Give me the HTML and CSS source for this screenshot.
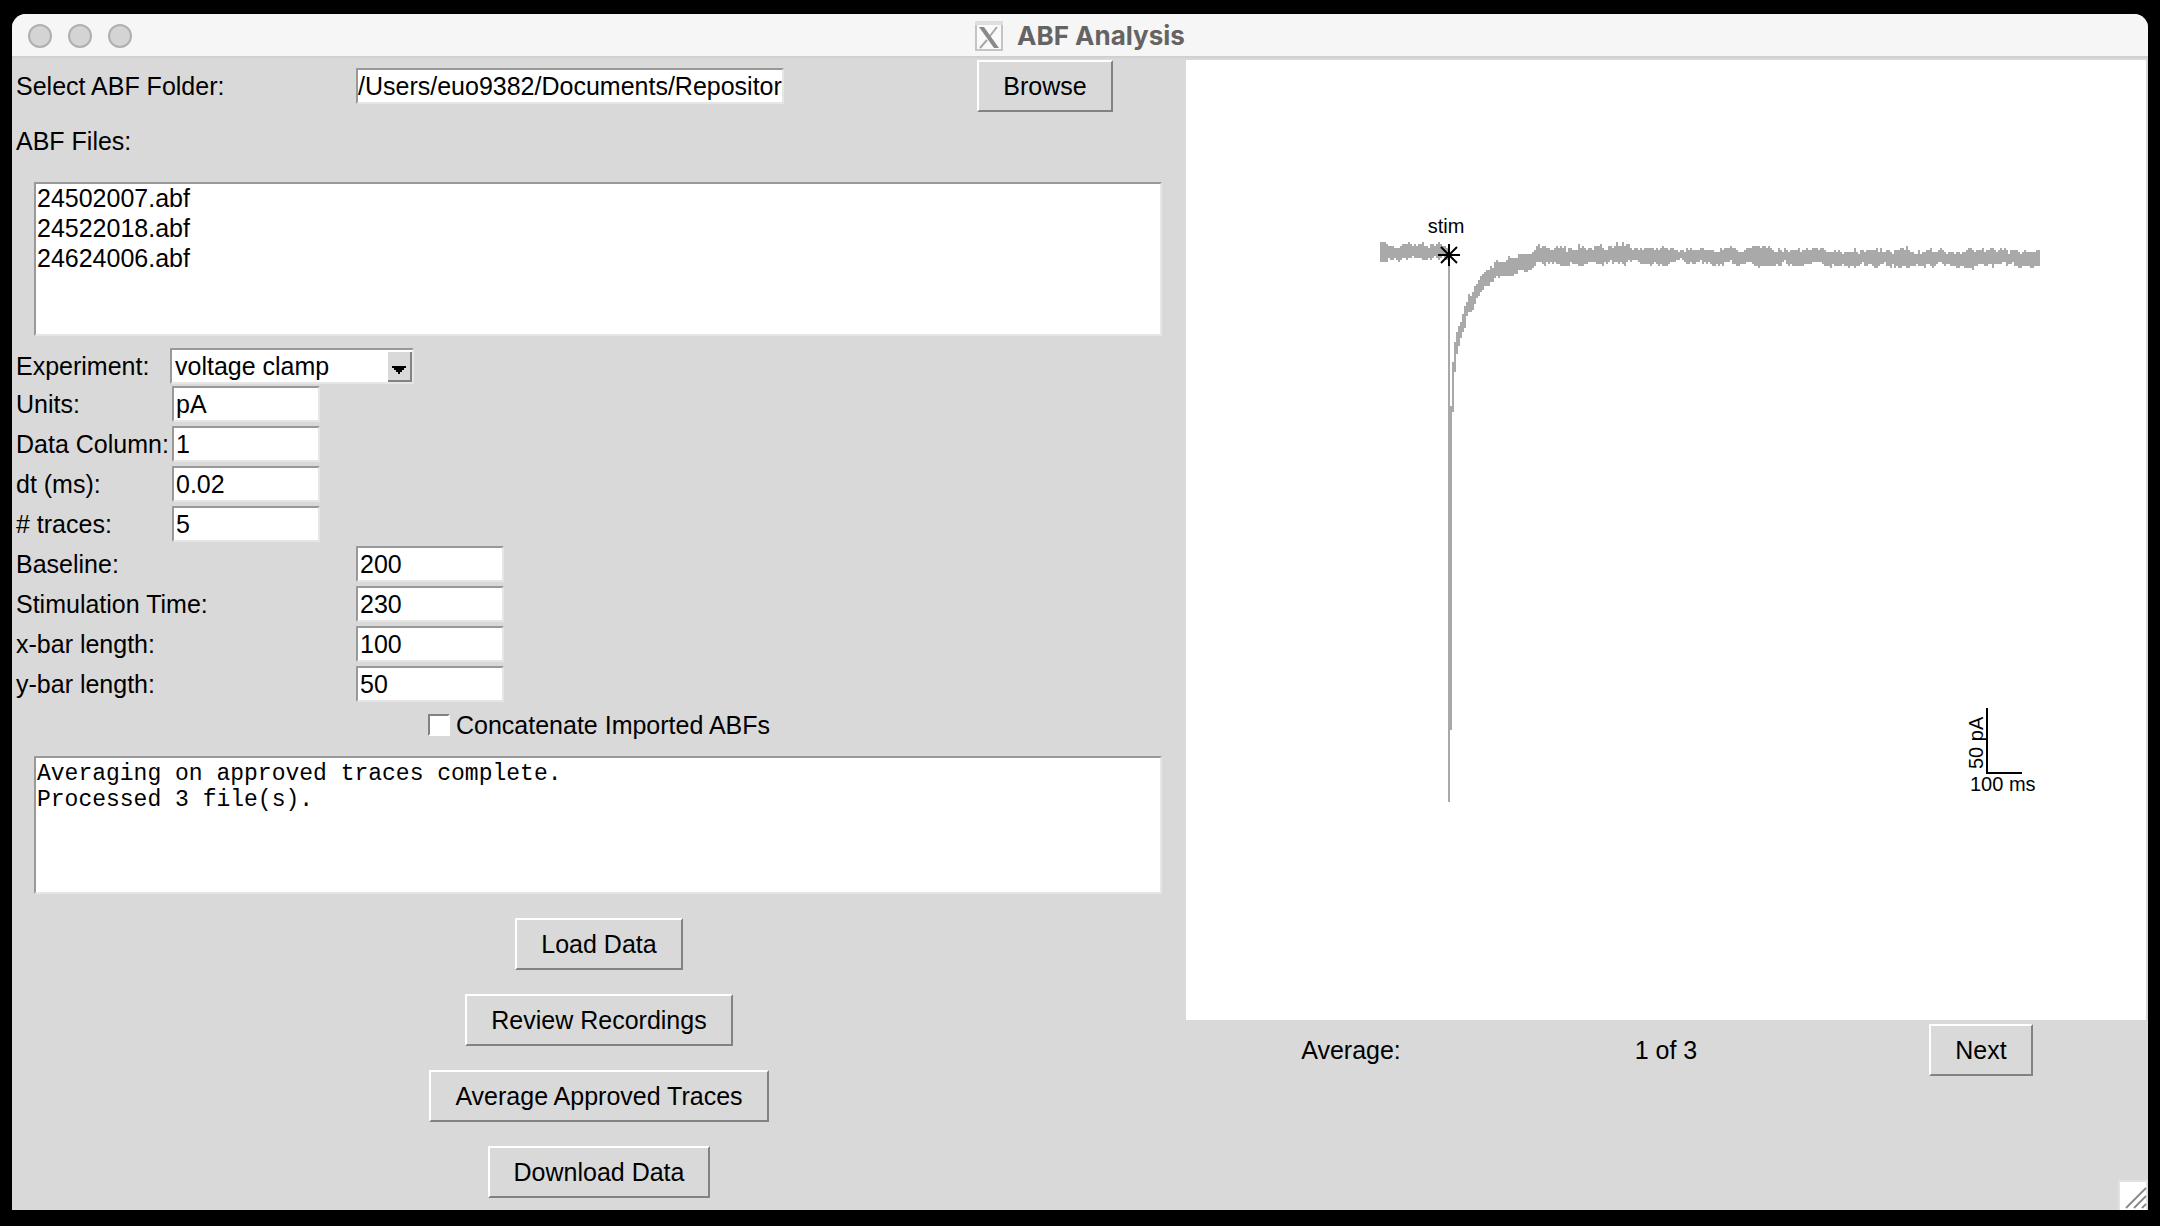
FILE: index.html
```html
<!DOCTYPE html>
<html lang="en">
<head>
<meta charset="utf-8">
<title>ABF Analysis</title>
<link rel="stylesheet" href="styles.css">
</head>
<body>
<div class="window">
  <header class="titlebar">
    <div class="lights">
      <button class="light" type="button" aria-label="Close"></button>
      <button class="light" type="button" aria-label="Minimize"></button>
      <button class="light" type="button" aria-label="Zoom"></button>
    </div>
    <h1 class="title">
      <svg class="x-icon" viewBox="0 0 28 30" aria-hidden="true">
        <rect x="1" y="1" width="26" height="28" fill="#fafafa" stroke="#c4c4c4" stroke-width="2"/>
        <path d="M0 2H28" stroke="#dedede" stroke-width="4"/>
        <path d="M22 6L15 15M12 19L5 27" stroke="#a8a8a8" stroke-width="2" fill="none"/>
        <path d="M4 6H9L24 27H19Z" fill="#8a8a8a"/>
      </svg>
      ABF Analysis
    </h1>
  </header>
  <main class="content">
    <form class="controls">
      <div class="row folder-row">
        <label for="folder">Select ABF Folder:</label>
        <input class="field folder" id="folder" type="text" value="/Users/euo9382/Documents/Repositor">
        <button class="button browse" type="button">Browse</button>
      </div>
      <label class="files-label" for="files">ABF Files:</label>
      <select class="files" id="files" size="5">
        <option>24502007.abf</option>
        <option>24522018.abf</option>
        <option>24624006.abf</option>
      </select>
      <div class="row narrow combo-row">
        <label for="experiment">Experiment:</label>
        <div class="combo">
          <select class="field" id="experiment">
            <option>voltage clamp</option>
            <option>current clamp</option>
          </select>
          <span class="arrow" aria-hidden="true"><svg viewBox="0 0 14 8"><path d="M0 0H14V2H12V4H10V6H8V8H6V6H4V4H2V2H0Z"/></svg></span>
        </div>
      </div>
      <div class="row narrow"><label for="units">Units:</label><input class="field" id="units" type="text" value="pA"></div>
      <div class="row narrow"><label for="column">Data Column:</label><input class="field" id="column" type="text" value="1"></div>
      <div class="row narrow"><label for="dt">dt (ms):</label><input class="field" id="dt" type="text" value="0.02"></div>
      <div class="row narrow"><label for="traces"># traces:</label><input class="field" id="traces" type="text" value="5"></div>
      <div class="row"><label for="baseline">Baseline:</label><input class="field" id="baseline" type="text" value="200"></div>
      <div class="row"><label for="stim">Stimulation Time:</label><input class="field" id="stim" type="text" value="230"></div>
      <div class="row"><label for="xbar">x-bar length:</label><input class="field" id="xbar" type="text" value="100"></div>
      <div class="row"><label for="ybar">y-bar length:</label><input class="field" id="ybar" type="text" value="50"></div>
      <label class="check"><input type="checkbox">Concatenate Imported ABFs</label>
      <textarea class="log" aria-label="Log" readonly>Averaging on approved traces complete.
Processed 3 file(s).</textarea>
      <div class="actions">
        <button class="button" type="button">Load Data</button>
        <button class="button" type="button">Review Recordings</button>
        <button class="button" type="button">Average Approved Traces</button>
        <button class="button" type="button">Download Data</button>
      </div>
    </form>
    <section class="results">
      <svg class="plot" viewBox="0 0 960 960" role="img" aria-label="Averaged trace">
        <path id="trace" fill="#a9a9a9" shape-rendering="crispEdges"/>
        <path d="M252 195H274M263 184V206M255 187L271 203M271 187L255 203" stroke="#000" stroke-width="2"/>
        <text x="260" y="173" text-anchor="middle">stim</text>
        <path d="M801 648V713H836" fill="none" stroke="#000" stroke-width="2"/>
        <text x="784" y="731">100 ms</text>
        <text transform="translate(797 709) rotate(-90)">50 pA</text>
      </svg>
      <div class="pager">
        <span>Average:</span>
        <span>1 of 3</span>
        <button class="button" type="button">Next</button>
      </div>
    </section>
  </main>
  <svg class="grip" viewBox="0 0 30 30" aria-hidden="true">
    <path d="M0 0H30V30H0Z" fill="#e2e2e2"/>
    <path d="M2 2H28V30H2Z" fill="#fff"/>
    <path d="M8 28L28 8M16 28L28 16M24 28L28 24" stroke="#8c8c8c" stroke-width="2"/>
  </svg>
</div>
<script src="trace.js"></script>
</body>
</html>
```
FILE: styles.css
```css
* { box-sizing: border-box; }

body {
  margin: 0;
  padding: 14px 12px 16px;
  min-height: 100vh;
  display: flex;
  background: #000;
  color: #000;
  font: 25px/30px "Liberation Sans", Arial, sans-serif;
}

button, input, select, textarea {
  margin: 0;
  border-radius: 0;
  font: inherit;
  color: inherit;
  outline: none;
}

.window {
  position: relative;
  flex: 1;
  min-width: 0;
  border-radius: 14px 14px 0 0;
  background: #d9d9d9;
  overflow: hidden;
}

.titlebar {
  height: 44px;
  display: grid;
  grid-template-columns: 1fr auto 1fr;
  align-items: center;
  padding: 2px 28px 0;
  background: #f6f6f6;
  border-bottom: 2px solid #d0d0d0;
}

.lights { display: flex; gap: 16px; margin-left: -12px; }

.light {
  width: 24px;
  height: 24px;
  padding: 0;
  border: 2px solid #b0b0b0;
  border-radius: 50%;
  background: #d4d4d4;
}

.title {
  display: flex;
  align-items: center;
  gap: 14px;
  margin: 0;
  color: #646464;
  font: 700 26px/30px Inter, sans-serif;
}

.x-icon { width: 28px; height: 30px; }

.content {
  display: grid;
  grid-template-columns: minmax(0, 1174fr) minmax(0, 960fr);
  align-items: start;
  padding-right: 2px;
}

.controls { display: flex; flex-direction: column; padding-bottom: 12px; }

.row {
  display: grid;
  grid-template-columns: 344fr 548fr 282fr;
  align-items: center;
  min-height: 40px;
}

.row > label, .files-label { padding-left: 4px; white-space: nowrap; }

.narrow { grid-template-columns: 160px 1fr; }

.folder-row { min-height: 56px; }

.field {
  width: 148px;
  height: 36px;
  padding: 0 2px;
  border: 2px solid;
  border-color: #999 #e6e6e6 #e6e6e6 #999;
  background: #fff;
}

.folder { width: 428px; padding: 0; }

.button {
  height: 52px;
  padding: 0 24px;
  border: 2px solid;
  border-color: #fff #828282 #828282 #fff;
  background: #d9d9d9;
  white-space: nowrap;
}

.browse { justify-self: center; }

.files-label { margin: 12px 0 26px; }

.files, .log {
  margin: 0 24px 0 22px;
  border: 2px solid;
  border-color: #999 #e6e6e6 #e6e6e6 #999;
  background: #fff;
  overflow: hidden;
  resize: none;
}

.files { height: 154px; padding: 0; }
.files option { min-height: 30px; padding: 0 1px; line-height: 30px; }

.combo-row {
  grid-template-columns: 158px 1fr;
  min-height: 36px;
  margin: 12px 0 0;
}

.combo { position: relative; width: 244px; height: 36px; }
.combo .field { width: 100%; padding: 0 3px; appearance: none; }

.arrow {
  position: absolute;
  top: 4px;
  right: 2px;
  width: 24px;
  height: 30px;
  display: grid;
  place-items: center;
  padding-top: 8px;
  border: solid #828282;
  border-width: 0 2px 2px 0;
  background: #d9d9d9;
  pointer-events: none;
}
.arrow svg { width: 14px; height: 8px; }

.check {
  display: flex;
  align-items: center;
  align-self: center;
  gap: 6px;
  height: 42px;
}
.check input {
  width: 22px;
  height: 22px;
  appearance: none;
  border: 2px solid;
  border-color: #828282 #fff #fff #828282;
  background: #fff;
}

.log {
  height: 138px;
  margin-top: 10px;
  padding: 3px 1px;
  font: 23px/26px "Liberation Mono", "Courier New", monospace;
}

.actions {
  display: flex;
  flex-direction: column;
  align-items: center;
  gap: 24px;
  padding-top: 24px;
}

.results { padding-top: 2px; }

.plot {
  display: block;
  width: 100%;
  background: #fff;
  font-size: 20px;
}

.pager {
  display: grid;
  grid-template-columns: 11fr 10fr 11fr;
  place-items: center;
  padding-top: 4px;
}

.grip {
  position: absolute;
  right: 0;
  bottom: 0;
  width: 30px;
  height: 30px;
}
```
FILE: trace.js
```js
// Draws the averaged trace as two-unit columns, each from its lowest to its highest sample.
const columns = [];
let seed = 7;
const random = () => (seed = (seed * 16807) % 2147483647) / 2147483647;
const even = (n) => Math.round(n / 2) * 2;

const noise = (from, to, topAt, bottomAt) => {
  let a = 0, b = 0;
  for (let x = from; x < to; x += 2) {
    a = a * 0.5 + (random() - 0.5) * 5;
    b = b * 0.5 + (random() - 0.5) * 5;
    const spike = random() > 0.97 ? 3 : 0;
    columns.push([x, even(topAt(x) + a - spike), even(bottomAt(x) + b)]);
  }
};

// Resting level before the stimulus
noise(194, 262, () => 185, () => 199);

// Stimulus artefact and early recovery
columns.push([262, 186, 742], [264, 346, 670]);
[[302, 352], [282, 312], [272, 294], [266, 286], [262, 278], [254, 272],
 [246, 268], [242, 256], [234, 252], [236, 252], [232, 250], [226, 244],
 [224, 238], [220, 236], [216, 232], [214, 230], [212, 226], [210, 226],
 [210, 226], [206, 222], [208, 222], [202, 218], [200, 216], [202, 218],
 [202, 216], [202, 216], [202, 216], [200, 216], [196, 216], [198, 216],
 [198, 216], [198, 214], [198, 214], [194, 210], [194, 210], [194, 210],
 [194, 212], [194, 212], [194, 210], [194, 210], [192, 208], [190, 206]
].forEach(([top, bottom], i) => columns.push([266 + i * 2, top, bottom]));

// Slow drift back to the baseline
const drift = (x) => Math.min(3, Math.max(0, (x - 480) / 90));
noise(350, 854, (x) => 188 + drift(x), (x) => 203 + drift(x));

document.getElementById("trace").setAttribute(
  "d", columns.map(([x, top, bottom]) => `M${x} ${top}h2V${bottom}h-2z`).join(""));
```
